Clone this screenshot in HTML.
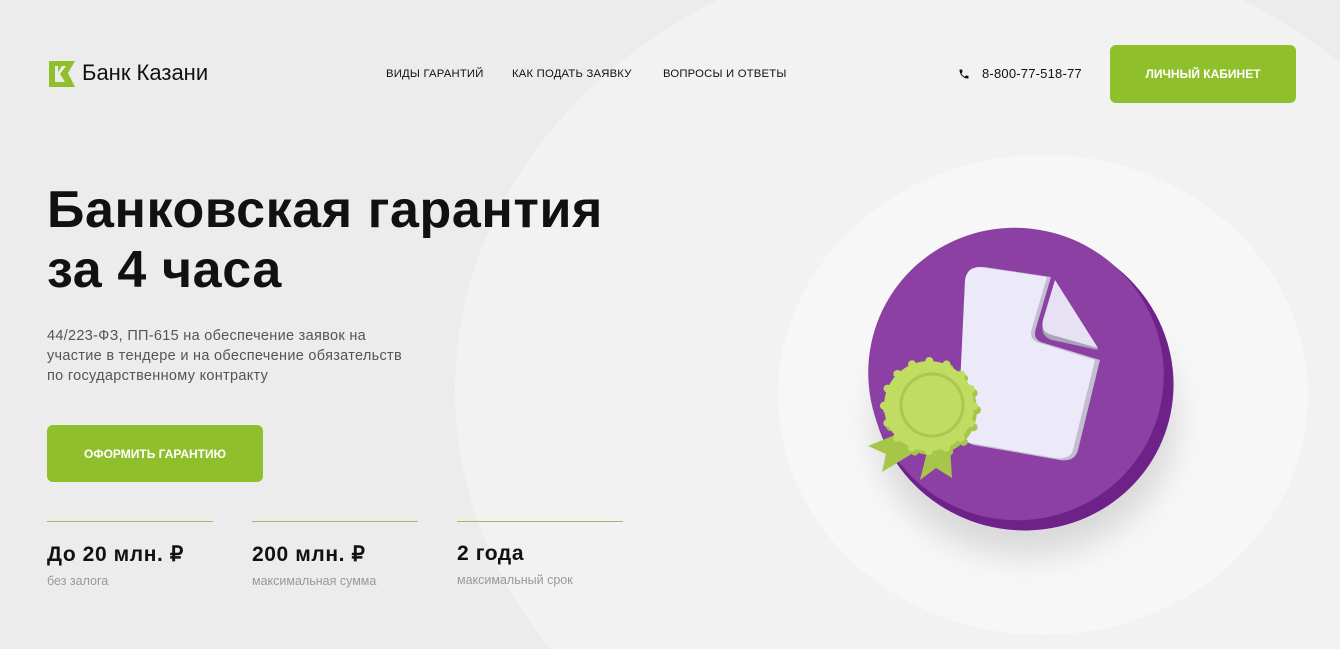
<!DOCTYPE html>
<html><head><meta charset="utf-8"><style>
*{margin:0;padding:0;box-sizing:border-box}
html,body{width:1340px;height:649px;overflow:hidden}
body{background:#ececec;font-family:"Liberation Sans",sans-serif;position:relative;color:#111}
.wrap{position:absolute;left:0;top:0;width:1340px;height:649px;overflow:hidden}
.bg1{position:absolute;left:455px;top:-60px;width:1050px;height:900px;border-radius:50%;background:#f2f2f2}
.bg2{position:absolute;left:778px;top:155px;width:530px;height:480px;border-radius:50%;background:#f7f7f7}
.nav{position:absolute;top:68px;font-size:11.3px;letter-spacing:.2px;color:#111}
.btn{position:absolute;background:#8fc02c;color:#fff;font-weight:bold;font-size:12px;border-radius:6px;display:flex;align-items:center;justify-content:center}
h1{position:absolute;left:47px;top:180px;font-size:52px;line-height:60px;font-weight:bold;letter-spacing:.6px}
.sub{position:absolute;left:47px;top:326px;font-size:14.5px;line-height:20px;color:#555;letter-spacing:.3px}
.stat{position:absolute;top:521px;width:166px;border-top:1px solid #9cbf5a;padding-top:20px}
.stat b{display:block;font-size:21px;font-weight:bold;color:#111;letter-spacing:.6px}
.stat span{display:block;font-size:12.5px;color:#999;margin-top:7px}
</style></head><body><div class="wrap">
<div class="bg1"></div><div class="bg2"></div>
<svg style="position:absolute;left:49px;top:61px" width="26" height="26" viewBox="0 0 26 26"><path d="M0 0H26L19 12L26 26H0Z" fill="#8fc02c"/><path d="M6 5V21H16L11 13L17 5H13L9 11V5Z" fill="#ececec"/></svg>
<div style="position:absolute;left:82px;top:60px;font-size:22px;color:#111">Банк Казани</div>
<div class="nav" style="left:386px">ВИДЫ ГАРАНТИЙ</div>
<div class="nav" style="left:512px">КАК ПОДАТЬ ЗАЯВКУ</div>
<div class="nav" style="left:663px">ВОПРОСЫ И ОТВЕТЫ</div>
<svg style="position:absolute;left:958px;top:68px" width="12" height="12" viewBox="0 0 24 24"><path d="M6.6 10.8a15 15 0 006.6 6.6l2.2-2.2c.3-.3.7-.4 1-.2 1.1.4 2.3.6 3.6.6.6 0 1 .4 1 1V20c0 .6-.4 1-1 1C10.6 21 3 13.4 3 4c0-.6.4-1 1-1h3.5c.6 0 1 .4 1 1 0 1.3.2 2.5.6 3.6.1.3 0 .7-.2 1z" fill="#111"/></svg>
<div class="nav" style="left:982px;top:66px;font-size:13px">8-800-77-518-77</div>
<div class="btn" style="left:1110px;top:45px;width:186px;height:58px">ЛИЧНЫЙ КАБИНЕТ</div>
<h1>Банковская гарантия<br>за 4 часа</h1>
<div class="sub">44/223-ФЗ, ПП-615 на обеспечение заявок на<br>участие в тендере и на обеспечение обязательств<br>по государственному контракту</div>
<div class="btn" style="left:47px;top:425px;width:216px;height:57px">ОФОРМИТЬ ГАРАНТИЮ</div>
<div class="stat" style="left:47px"><b>До 20 млн. ₽</b><span>без залога</span></div>
<div class="stat" style="left:252px"><b>200 млн. ₽</b><span>максимальная сумма</span></div>
<div class="stat" style="left:457px"><b>2 года</b><span>максимальный срок</span></div>
<svg style="position:absolute;left:840px;top:210px" width="380" height="400" viewBox="0 0 380 400">
<defs><filter id="sh" x="-30%" y="-30%" width="160%" height="160%"><feGaussianBlur stdDeviation="16"/></filter></defs>
<ellipse cx="185" cy="210" rx="150" ry="135" fill="#000" opacity=".12" filter="url(#sh)"/>
<ellipse cx="182" cy="172" rx="152" ry="148" transform="rotate(20 182 172)" fill="#6e2189"/>
<ellipse cx="176" cy="164" rx="148" ry="146" transform="rotate(20 176 164)" fill="#8c40a4"/>
<path d="M144 57L211 67L196 118Q192 130 204 133L260 150L238 240Q235 252 220 250L134 235Q122 232 122 220L129 70Q131 57 144 57Z" fill="#c3bdd0"/>
<path d="M140 57L207 67L192 118Q188 130 200 133L255 150L233 240Q230 250 215 248L130 233Q118 230 118 218L125 70Q127 57 140 57Z" fill="#ece9f8"/>
<path d="M215 72L258 140L212 130Q200 126 203 114Z" fill="#aaa4b8"/>
<path d="M215 70L258 138L212 125Q200 122 203 110Z" fill="#e6e2f3"/>
<path d="M62 222L28 236L46 244L42 262L78 240Z M88 238L80 270L96 258L112 268L110 236Z" fill="#a6c64a"/>
<circle cx="92" cy="200" r="45" fill="#a6c64a" stroke="#a6c64a" stroke-width="8" stroke-dasharray="0 17.67" stroke-linecap="round"/>
<circle cx="89" cy="196" r="45" fill="#c0dd62" stroke="#c0dd62" stroke-width="8" stroke-dasharray="0 17.67" stroke-linecap="round"/>
<circle cx="92" cy="195" r="31" fill="none" stroke="#a8c851" stroke-width="3"/>
</svg>
</div></body></html>
